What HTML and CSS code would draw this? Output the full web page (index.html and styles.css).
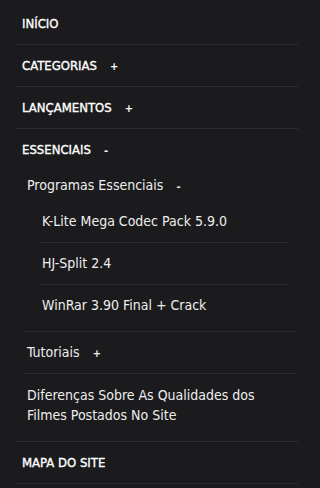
FILE: index.html
```html
<!DOCTYPE html>
<html lang="pt">
<head>
<meta charset="utf-8">
<link rel="stylesheet" href="styles.css">
</head>
<body>
<nav class="menu">
  <ul class="lvl1">
    <li><a class="l1">INÍCIO</a></li>
    <li><a class="l1">CATEGORIAS<span class="tog">+</span></a></li>
    <li><a class="l1">LANÇAMENTOS<span class="tog">+</span></a></li>
    <li class="open"><a class="l1">ESSENCIAIS<span class="tog">-</span></a>
      <ul class="lvl2">
        <li class="open2"><a class="l2 head">Programas Essenciais<span class="tog">-</span></a>
          <ul class="lvl3">
            <li><a class="l3">K-Lite Mega Codec Pack 5.9.0</a></li>
            <li><a class="l3">HJ-Split 2.4</a></li>
            <li class="last"><a class="l3">WinRar 3.90 Final + Crack</a></li>
          </ul>
        </li>
        <li><a class="l2">Tutoriais<span class="tog">+</span></a></li>
        <li class="last"><a class="l2 two">Diferenças Sobre As Qualidades dos Filmes Postados No Site</a></li>
      </ul>
    </li>
    <li><a class="l1">MAPA DO SITE</a></li>
  </ul>
</nav>
</body>
</html>
```
FILE: styles.css
```css
html, body {
  margin: 0;
  padding: 0;
  background: #1b1b1d;
}
body {
  font-family: "DejaVu Sans Condensed", "DejaVu Sans", sans-serif;
  color: #f2f2f2;
}
.menu {
  width: 282px;
  padding-top: 3px;
  padding-left: 16px;
}
ul {
  list-style: none;
  margin: 0;
  padding: 0;
}
.lvl1 > li {
  border-bottom: 1px solid #2c2c2f;
}
a {
  display: block;
  color: inherit;
  text-decoration: none;
}
.l1 {
  padding: 12px 6px;
  line-height: 17px;
  font-size: 13px;
  color: #ffffff;
  -webkit-text-stroke: 0.35px #ffffff;
}
.tog {
  margin-left: 13px;
  font-size: 11px;
  font-weight: bold;
  line-height: 1;
  -webkit-text-stroke: 0;
}
.lvl2 {
  margin: 0 2px 0 8px;
}
.lvl2 > li {
  border-bottom: 1px solid #2c2c2f;
}
.lvl2 > li.last {
  border-bottom: none;
}
.l2 {
  padding: 12px 3px;
  line-height: 17px;
  font-size: 14px;
  color: #eeeeee;
  -webkit-text-stroke: 0;
}
.l2.head {
  padding: 7px 3px;
}
.l2.two {
  padding: 11px 3px 16px;
  line-height: 20px;
}
.lvl3 {
  margin: 0 8px 0 16px;
  padding-bottom: 5px;
}
.lvl3 > li {
  border-bottom: 1px solid #2c2c2f;
}
.lvl3 > li.last {
  border-bottom: none;
}
.l3 {
  padding: 12px 2px;
  line-height: 17px;
  font-size: 14px;
  color: #eeeeee;
}
```
